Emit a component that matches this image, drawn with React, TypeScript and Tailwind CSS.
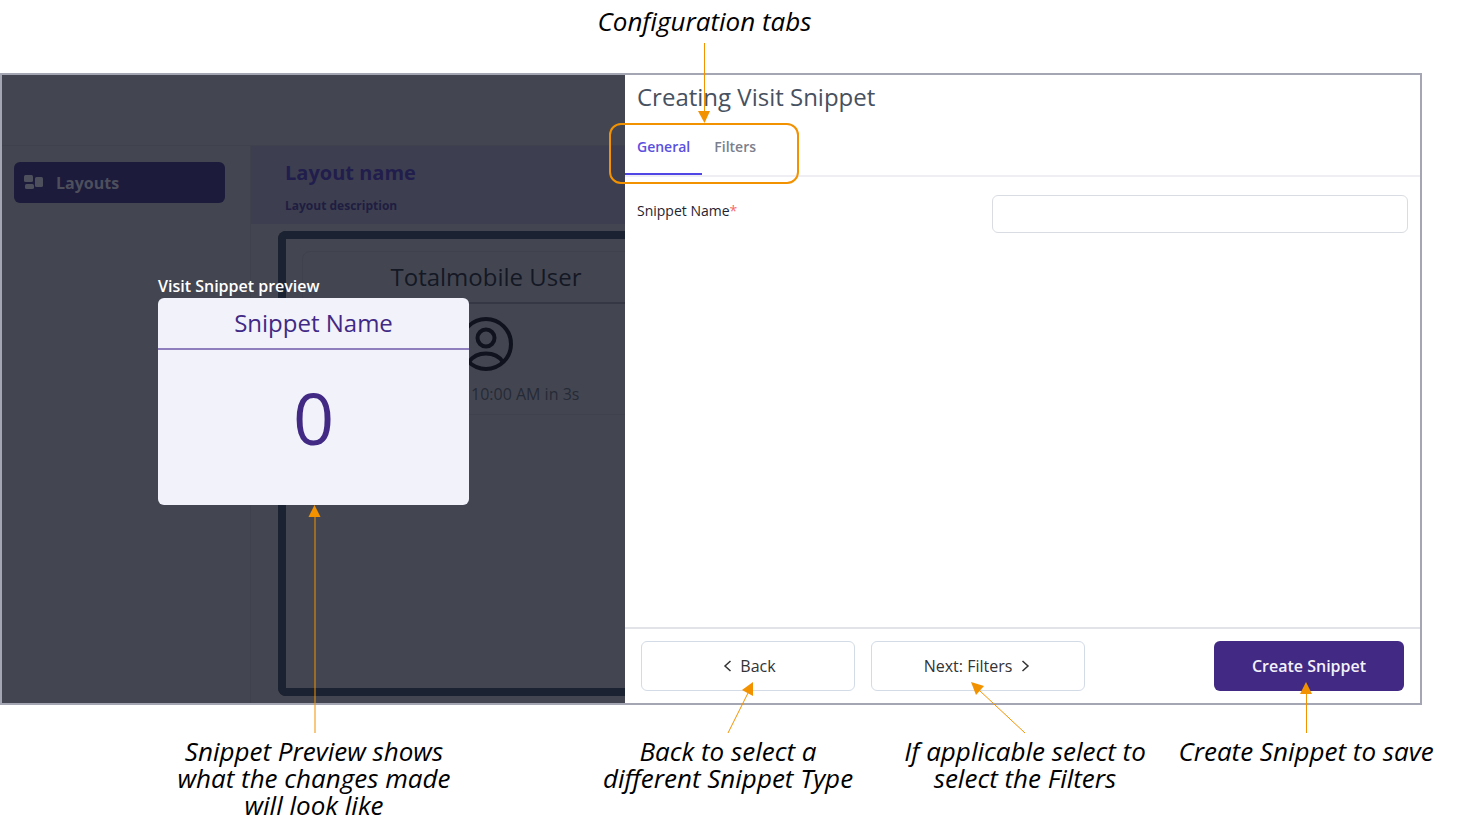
import React, { useState } from 'react';

const tabs = ['General', 'Filters'];

const captions = [
  ['Snippet Preview shows', 'what the changes made', 'will look like'],
  ['Back to select a', 'different Snippet Type'],
  ['If applicable select to', 'select the Filters'],
  ['Create Snippet to save'],
];

const LayoutsIcon = () => (
  <svg width="20" height="16" viewBox="0 0 20 16" fill="currentColor" aria-hidden="true">
    <rect x="0" y="0" width="9" height="7" rx="1.5" />
    <rect x="1" y="9" width="9" height="5" rx="1.5" />
    <rect x="11" y="2" width="8" height="10" rx="1.5" />
  </svg>
);

const UserIcon = () => (
  <svg width="56" height="56" viewBox="0 0 56 56" fill="none" stroke="currentColor" strokeWidth="4" aria-hidden="true">
    <circle cx="28" cy="28" r="25" />
    <circle cx="28" cy="22" r="8.5" />
    <path d="M11 46c4-6 10-8.500 17-8.500s13 2.500 17 8.500" />
  </svg>
);

const ChevronLeft = () => (
  <svg width="12" height="12" viewBox="0 0 12 12" fill="none" stroke="currentColor" strokeWidth="1.5" aria-hidden="true">
    <path d="M10.500 1L5 6l5.500 5" />
  </svg>
);

const ChevronRight = () => (
  <svg width="12" height="12" viewBox="0 0 12 12" fill="none" stroke="currentColor" strokeWidth="1.5" aria-hidden="true">
    <path d="M2.500 1L8 6l-5.500 5" />
  </svg>
);

// Content behind the modal, already dimmed
const Backdrop = () => (
  <div className="flex h-full flex-col overflow-hidden bg-[#434651]">
    <div className="h-[71px] shrink-0 border-b border-[#3f424d]" />
    <div className="flex flex-1">
      <div className="w-[249px] shrink-0 border-r border-[#3f424d] px-3 pt-4">
        <button className="flex h-[41px] w-[211px] items-center gap-3 rounded-md bg-[#1c1b3b] px-[10px] font-bold text-[#4d4f5d]">
          <LayoutsIcon />
          Layouts
        </button>
      </div>
      <div className="flex min-w-0 flex-1 flex-col">
        <div className="h-[78px] shrink-0 bg-[#3d3f50] px-[34px] pt-3 text-[#211d4c]">
          <h2 className="text-xl leading-[30px] font-bold">Layout name</h2>
          <p className="pt-2 text-xs leading-5 font-bold text-[#1f1d40]">Layout description</p>
        </div>
        <div className="my-[7px] ml-[27px] flex-1 rounded-l-lg border-8 border-r-0 border-[#1b2231] pt-3 pl-4">
          <div className="h-[164px] w-[368px] rounded-lg border border-[#3f424d]">
            <h3 className="flex h-[52px] items-center justify-center border-b-2 border-[#353844] text-2xl text-[#141824]">
              Totalmobile User
            </h3>
            <div className="flex h-[80px] items-center justify-center text-[#10131d]">
              <UserIcon />
            </div>
            <p className="pl-[168px] text-base leading-5 text-[#262a36]">10:00 AM in 3s</p>
          </div>
        </div>
      </div>
    </div>
  </div>
);

const SnippetPreview = ({ name }: { name: string }) => (
  <div className="absolute inset-0 flex items-center justify-center">
    <div className="relative w-[311px]">
      <p className="text-base leading-6 font-semibold text-white">Visit Snippet preview</p>
      <div className="overflow-hidden rounded-md bg-[#f2f2fb] text-center text-[#412984]">
        <h2 className="h-[52px] truncate border-b-2 border-[#8f7fbd] text-2xl leading-[50px]">{name || 'Snippet Name'}</h2>
        <div className="flex h-[155px] items-center justify-center pb-5 text-7xl">0</div>
      </div>
      <svg className="pointer-events-none absolute top-full left-1/2 z-10 -translate-x-1/2" width="15" height="228" viewBox="0 0 15 228" fill="#f39200" aria-hidden="true">
        <path d="M2 12L8 0l6 12z" />
        <path d="M8 12h1v216h-1z" />
      </svg>
    </div>
  </div>
);

export default function App() {
  const [activeTab, setActiveTab] = useState('General');
  const [name, setName] = useState('');

  return (
    <div className="min-h-screen bg-white pr-9 font-['Open_Sans',sans-serif] text-black">
      <div className="grid h-[73px] grid-cols-[560fr_288fr_573fr]">
        <p className="col-start-2 pt-2 text-center text-[26px] leading-[27px] italic">
          Configuration tabs
        </p>
      </div>

      <div className="grid min-h-[632px] grid-cols-[623fr_795fr] border-2 border-[#a4a6b3]">
        <div className="relative">
          <div className="absolute inset-0">
            <Backdrop />
          </div>
          <SnippetPreview name={name} />
        </div>

        <div className="relative flex flex-col bg-white">
          <h1 className="px-3 pt-[6px] text-2xl leading-8 text-[#475160]">Creating Visit Snippet</h1>

          <div className="relative mt-[10px] border-b-2 border-[#eeeef3] pt-1">
            <div role="tablist" className="flex">
              {tabs.map(tab => (
                <button
                  key={tab}
                  role="tab"
                  aria-selected={tab === activeTab}
                  onClick={() => setActiveTab(tab)}
                  className={`border-b-2 px-3 pt-2 pb-[14px] text-sm leading-6 font-semibold ${
                    tab === activeTab ? 'border-[#5046e5] text-[#5a50e0]' : 'border-transparent text-[#7b808c]'
                  }`}
                >
                  {tab}
                </button>
              ))}
            </div>
            {/* Callout round the tabs */}
            <div className="pointer-events-none absolute top-0 -left-4 h-[61px] w-[190px] rounded-xl border-2 border-[#f39200]" />
            <svg className="pointer-events-none absolute bottom-full left-[73px]" width="12" height="80" viewBox="0 0 12 80" fill="#f39200" aria-hidden="true">
              <path d="M6 0h1v70h-1z" />
              <path d="M0 68h12L6.500 80z" />
            </svg>
          </div>

          <div className="grid flex-1 grid-cols-[355fr_416fr] items-start px-3 pt-[18px]">
            <label htmlFor="snippet-name" className="pt-1 text-sm leading-6 text-[#1f2430]">
              Snippet Name<span className="text-[#f46a6a]">*</span>
            </label>
            <input
              id="snippet-name"
              type="text"
              value={name}
              onChange={e => setName(e.target.value)}
              className="h-[38px] w-full rounded-md border border-[#d9dce2] px-3 text-sm"
            />
          </div>

          <div className="flex gap-4 border-t-2 border-[#e1e3e9] px-4 py-3 text-[#333]">
            <button className="relative flex h-[50px] w-[214px] items-center justify-center gap-2 rounded-md border border-[#d3dbe6] font-medium">
              <ChevronLeft />
              Back
              <svg className="pointer-events-none absolute top-10 left-[84px]" width="28" height="52" viewBox="0 0 28 52" aria-hidden="true">
                <path d="M2 51L22 11" stroke="#f39200" />
                <path d="M27 0v14L16 8z" fill="#f39200" />
              </svg>
            </button>
            <button className="relative flex h-[50px] w-[214px] items-center justify-center gap-2 rounded-md border border-[#d3dbe6] font-medium">
              Next: Filters
              <ChevronRight />
              <svg className="pointer-events-none absolute top-10 left-[99px]" width="56" height="52" viewBox="0 0 56 52" aria-hidden="true">
                <path d="M54 51L8 8" stroke="#f39200" />
                <path d="M0 0l13 4-8 9z" fill="#f39200" />
              </svg>
            </button>
            <button className="relative ml-auto h-[50px] w-[190px] rounded-md bg-[#412984] font-semibold text-[#f3f1fa]">
              Create Snippet
              <svg className="pointer-events-none absolute top-[41px] left-[86px]" width="12" height="51" viewBox="0 0 12 51" fill="#f39200" aria-hidden="true">
                <path d="M0 12L6 0l6 12z" />
                <path d="M6 12h1v39h-1z" />
              </svg>
            </button>
          </div>
        </div>
      </div>

      <div className="-mr-4 grid grid-cols-[532fr_296fr_298fr_264fr] pt-[33px] pl-12 text-center text-[26px] leading-[27px] whitespace-nowrap italic">
        {captions.map(lines => (
          <p key={lines[0]}>
            {lines.map(line => (
              <span key={line} className="block">{line}</span>
            ))}
          </p>
        ))}
      </div>
    </div>
  );
}
